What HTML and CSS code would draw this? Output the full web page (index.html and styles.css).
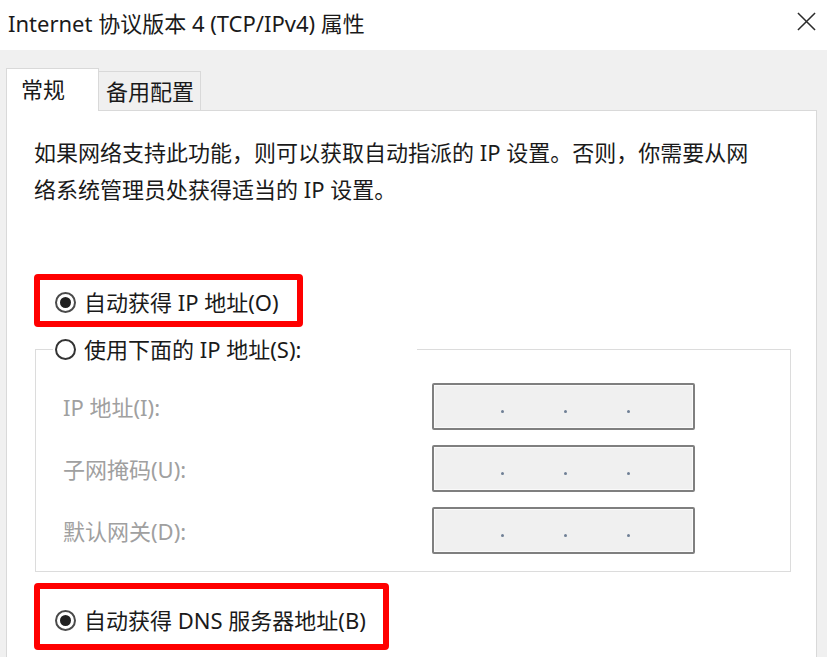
FILE: index.html
```html
<!DOCTYPE html>
<html lang="zh-CN">
<head>
<meta charset="utf-8">
<title>Internet 协议版本 4 (TCP/IPv4) 属性</title>
<link rel="stylesheet" href="styles.css">
</head>
<body>
<div class="window">
  <header class="titlebar">
    <span class="title">Internet 协议版本 4 (TCP/IPv4) 属性</span>
    <svg class="close" viewBox="0 0 20 20" aria-label="关闭"><path d="M1 1L19 19M19 1L1 19" stroke="#2b2b2b" stroke-width="1.6" fill="none"/></svg>
  </header>
  <nav class="tabs">
    <div class="tab active">常规</div>
    <div class="tab inactive">备用配置</div>
  </nav>
  <main class="panel">
    <p class="intro">如果网络支持此功能，则可以获取自动指派的 IP 设置。否则，你需要从网<br>络系统管理员处获得适当的 IP 设置。</p>
    <div class="highlight auto-ip">
      <label class="radio"><span class="dot checked"></span>自动获得 IP 地址(O)</label>
    </div>
    <fieldset class="group">
      <legend class="legend"><label class="radio"><span class="dot"></span>使用下面的 IP 地址(S):</label></legend>
      <div class="rows">
        <span class="lbl">IP 地址(I):</span>
        <div class="ipbox"><i></i><i></i><i></i></div>
        <span class="lbl">子网掩码(U):</span>
        <div class="ipbox"><i></i><i></i><i></i></div>
        <span class="lbl">默认网关(D):</span>
        <div class="ipbox"><i></i><i></i><i></i></div>
      </div>
    </fieldset>
    <div class="highlight dns">
      <label class="radio"><span class="dot checked"></span>自动获得 DNS 服务器地址(B)</label>
    </div>
  </main>
</div>
</body>
</html>
```
FILE: styles.css
```css
* { box-sizing: border-box; }
html, body { margin: 0; padding: 0; }
body {
  width: 827px;
  height: 657px;
  overflow: hidden;
  background: #f0f0f0;
  font-family: "Noto Sans", "Noto Sans CJK SC", sans-serif;
  font-size: 22px;
  color: #1a1a1a;
}
.titlebar {
  height: 50px;
  background: #fff;
  display: flex;
  align-items: center;
  justify-content: space-between;
  padding: 0 11px 5px 8px;
}
.title { line-height: 30px; white-space: nowrap; }
.close { width: 19px; height: 19px; margin-bottom: 3px; }

.tabs {
  height: 60px;
  display: flex;
  align-items: flex-end;
  padding-left: 6px;
}
.tab {
  border: 1px solid #d9d9d9;
  border-bottom: none;
  line-height: 30px;
  white-space: nowrap;
}
.tab.active {
  background: #fff;
  width: 93px;
  height: 43px;
  margin-bottom: -1px;
  padding: 5px 0 0 14px;
  position: relative;
  z-index: 1;
}
.tab.inactive {
  background: #f0f0f0;
  width: 103px;
  height: 39px;
  margin-left: -1px;
  padding: 4px 0 0 7px;
}

.panel {
  display: block;
  background: #fff;
  border: 1px solid #d9d9d9;
  margin: 0 10px 0 6px;
  height: 560px;
}
.intro {
  margin: 23px 0 0 27px;
  line-height: 37px;
  white-space: nowrap;
}
.highlight {
  border: 6px solid #ff0000;
  border-radius: 4px;
  display: flex;
  align-items: center;
  padding-left: 15px;
  margin-left: 27px;
}
.auto-ip {
  width: 269px;
  height: 53px;
  margin-top: 66px;
  padding-top: 3px;
}
.dns {
  width: 355px;
  height: 67px;
  margin-top: 11px;
  padding-top: 7px;
}
.radio {
  display: flex;
  align-items: center;
  gap: 8px;
  line-height: 30px;
  white-space: nowrap;
}
.dot {
  flex: none;
  width: 21px;
  height: 21px;
  border-radius: 50%;
  border: 2px solid #333;
  background: #fff;
  display: grid;
  place-items: center;
}
.dot.checked { border-color: #4a4a4a; }
.dot.checked::after {
  content: "";
  width: 11px;
  height: 11px;
  border-radius: 50%;
  background: #1f1f1f;
}

.group {
  margin: 7px 0 0 28px;
  width: 756px;
  min-width: 0;
  border: 1px solid #dcdcdc;
  padding: 0 0 17px 0;
}
.legend {
  margin-left: 17px;
  padding: 0 2px;
  width: 364px;
  line-height: 30px;
}
.rows {
  display: grid;
  grid-template-columns: 369px 263px;
  row-gap: 15px;
  align-items: center;
  padding: 19px 0 0 27px;
}
.lbl {
  color: #a0a0a0;
  line-height: 30px;
  white-space: nowrap;
}
.ipbox {
  height: 47px;
  border: 2px solid #7f7f7f;
  border-radius: 2px;
  background: #f0f0f0;
  box-shadow: inset 0 0 0 1px #fafafa;
  display: flex;
  gap: 60px;
  padding: 25px 0 0 67px;
}
.ipbox i {
  display: block;
  width: 3px;
  height: 3px;
  border-radius: 50%;
  background: #6f7f95;
}
```
